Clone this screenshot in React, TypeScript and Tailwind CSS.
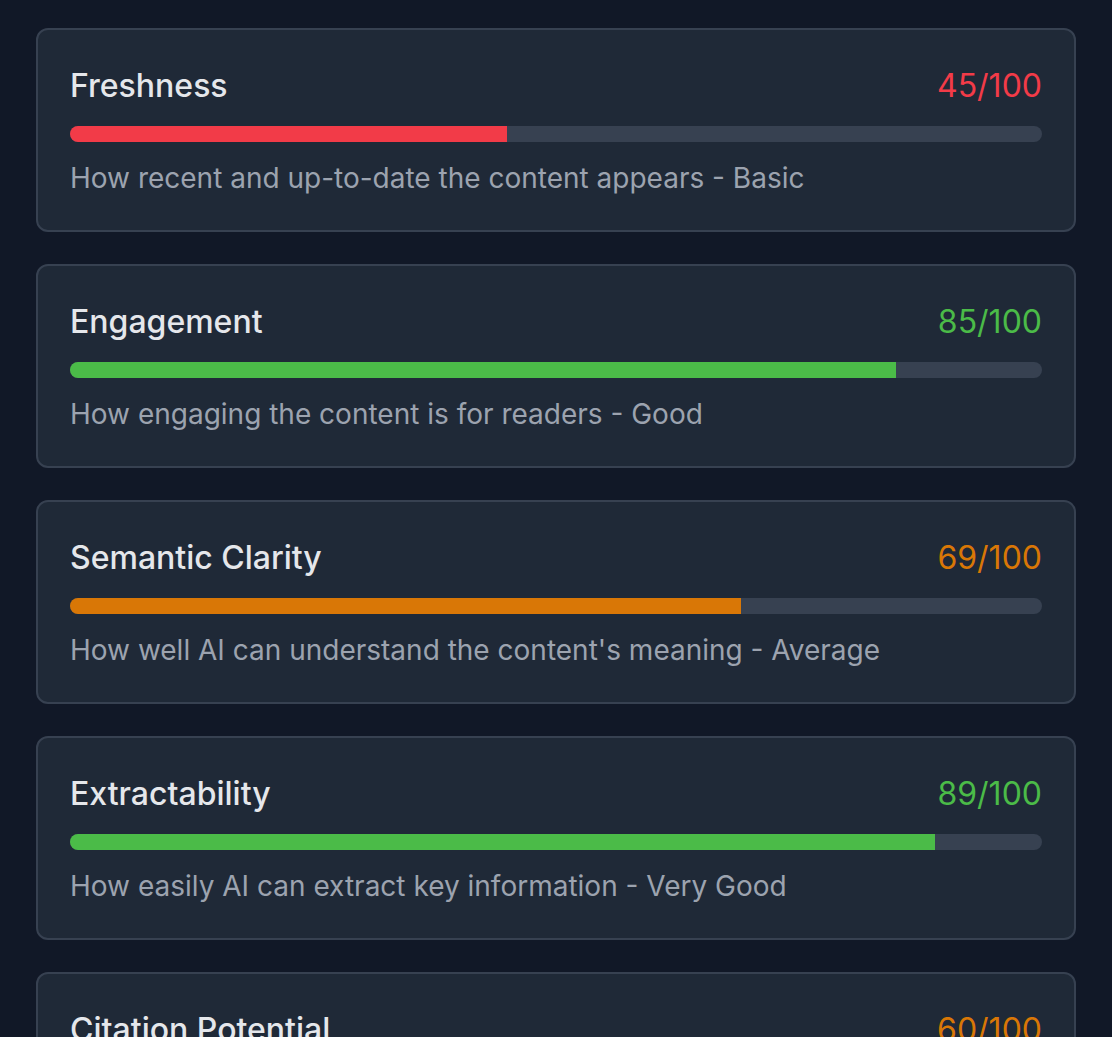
import React from 'react'

type Metric = { name: string; score: number; desc: string; color: string; text: string }

const metrics: Metric[] = [
  { name: 'Freshness', score: 45, desc: 'How recent and up-to-date the content appears - Basic', color: 'bg-[#f23b48]', text: 'text-[#f23b48]' },
  { name: 'Engagement', score: 85, desc: 'How engaging the content is for readers - Good', color: 'bg-[#4bbb48]', text: 'text-[#4bbb48]' },
  { name: 'Semantic Clarity', score: 69, desc: "How well AI can understand the content's meaning - Average", color: 'bg-[#d97706]', text: 'text-[#d97706]' },
  { name: 'Extractability', score: 89, desc: 'How easily AI can extract key information - Very Good', color: 'bg-[#4bbb48]', text: 'text-[#4bbb48]' },
  { name: 'Citation Potential', score: 60, desc: 'How likely AI is to cite this content - Average', color: 'bg-[#d97706]', text: 'text-[#d97706]' },
]

function MetricCard({ m }: { m: Metric }) {
  return (
    <div className="bg-[#1f2937] border-2 border-[#374151] rounded-xl p-8">
      <div className="flex items-center justify-between mb-4">
        <span className="text-[32px] leading-[48px] font-medium text-[#e5e7eb]">{m.name}</span>
        <span className={`text-[32px] leading-[48px] ${m.text}`}>{m.score}/100</span>
      </div>
      <div className="h-4 w-full bg-[#374151] rounded-full overflow-hidden">
        <div className={`h-full ${m.color}`} style={{ width: `${m.score}%` }} />
      </div>
      <p className="mt-4 text-[28px] leading-[40px] text-[#9ca3af]">{m.desc}</p>
    </div>
  )
}

export default function App() {
  return (
    <div className="min-h-screen bg-[#111827] px-9 pt-7 pb-9 font-['Inter',sans-serif]">
      <div className="flex flex-col gap-8">
        {metrics.map((m) => (
          <MetricCard key={m.name} m={m} />
        ))}
      </div>
    </div>
  )
}
